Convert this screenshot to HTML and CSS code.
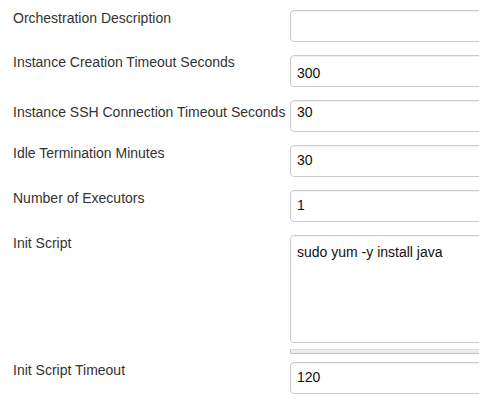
FILE: index.html
```html
<!DOCTYPE html>
<html>
<head>
<meta charset="utf-8">
<link rel="stylesheet" href="styles.css">
</head>
<body>
<div class="form">
  <div class="row">
    <div class="label">Orchestration Description</div>
    <div class="field"><input class="input" type="text" value=""></div>
  </div>
  <div class="row">
    <div class="label label--up">Instance Creation Timeout Seconds</div>
    <div class="field"><input class="input input--low" type="text" value="300"></div>
  </div>
  <div class="row">
    <div class="label label--down">Instance SSH Connection Timeout Seconds</div>
    <div class="field"><input class="input input--high" type="text" value="30"></div>
  </div>
  <div class="row">
    <div class="label">Idle Termination Minutes</div>
    <div class="field"><input class="input" type="text" value="30"></div>
  </div>
  <div class="row">
    <div class="label">Number of Executors</div>
    <div class="field"><input class="input" type="text" value="1"></div>
  </div>
  <div class="row row--script">
    <div class="label">Init Script</div>
    <div class="field">
      <textarea class="textarea">sudo yum -y install java</textarea>
      <div class="handle"></div>
    </div>
  </div>
  <div class="row">
    <div class="label">Init Script Timeout</div>
    <div class="field"><input class="input" type="text" value="120"></div>
  </div>
</div>
</body>
</html>
```
FILE: styles.css
```css
html, body {
  margin: 0;
  padding: 0;
  overflow: hidden;
  background: #fff;
}
body {
  font-family: "Liberation Sans", Arial, sans-serif;
  font-size: 14px;
  line-height: 16px;
  color: #333;
}
.form {
  display: flex;
  flex-direction: column;
  padding: 10px 0 0 13px;
  width: 466px;
}
.row {
  display: grid;
  grid-template-columns: 277px 189px;
  align-items: start;
  padding-bottom: 13px;
}
.row--script {
  padding-bottom: 8px;
}
.label {
  white-space: nowrap;
}
.label--up {
  margin-top: -1px;
}
.label--down {
  margin-top: 4px;
}
.field {
  display: flex;
  flex-direction: column;
  overflow: hidden;
}
.input, .textarea {
  box-sizing: border-box;
  flex: none;
  width: 230px;
  margin: 0;
  border: 1px solid #ccc;
  border-radius: 4px;
  box-shadow: inset 0 1px 1px rgba(0,0,0,0.06);
  font-family: "Liberation Sans", Arial, sans-serif;
  font-size: 14px;
  color: #111;
  background: #fff;
  outline: none;
}
.input {
  height: 32px;
  line-height: 20px;
  padding: 4px 6px 6px;
}
.input--low {
  padding-top: 7px;
  padding-bottom: 3px;
}
.input--high {
  padding-top: 1px;
  padding-bottom: 9px;
}
.textarea {
  display: block;
  height: 108px;
  line-height: 16px;
  padding: 8px 6px;
  resize: none;
}
.handle {
  box-sizing: border-box;
  flex: none;
  width: 230px;
  margin-top: 6px;
  height: 5px;
  background: #ececec;
  border-left: 1px solid #c4c4c4;
  border-bottom: 1px solid #c4c4c4;
  border-top: 1px solid #dedede;
}
```
